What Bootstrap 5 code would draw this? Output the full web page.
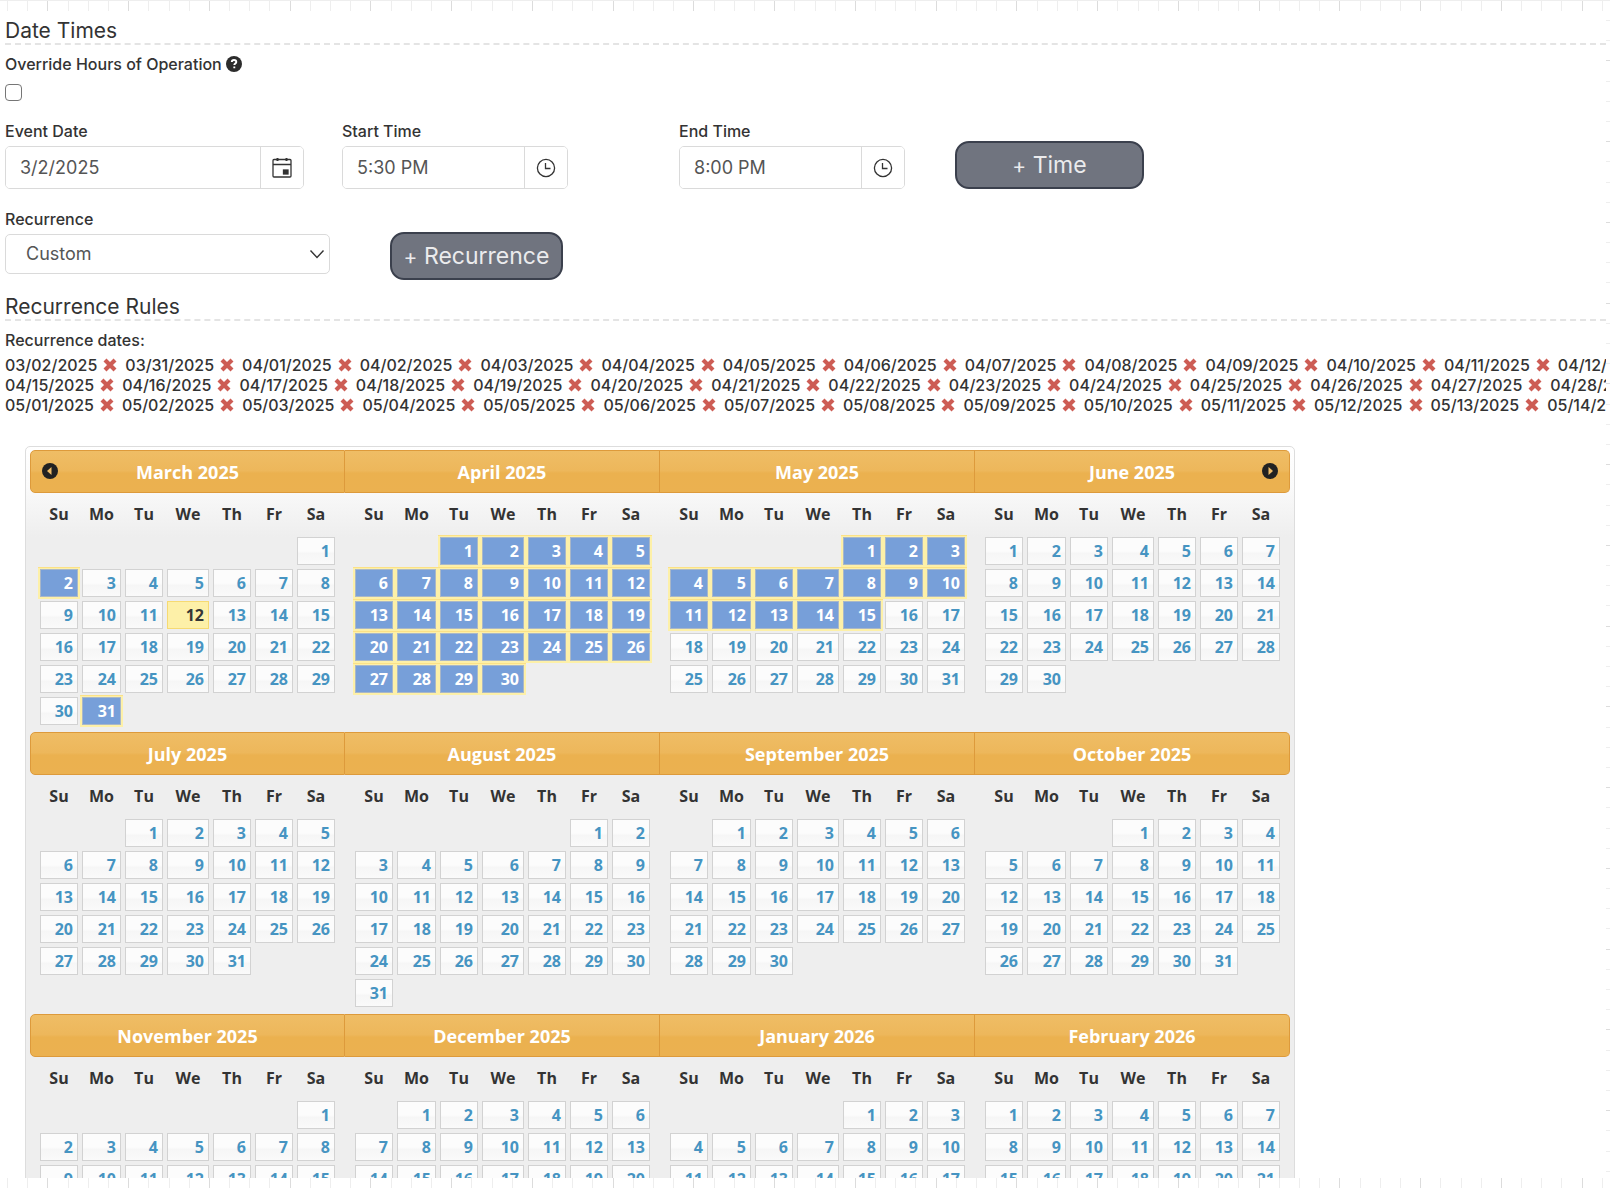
<!DOCTYPE html>
<html lang="en">
<head>
<meta charset="utf-8">
<meta name="viewport" content="width=device-width, initial-scale=1">
<title>Date Times</title>
<link href="https://cdn.jsdelivr.net/npm/bootstrap@5.3.0/dist/css/bootstrap.min.css" rel="stylesheet">
<style>
body{font-family:Inter,"Liberation Sans",sans-serif;font-size:16px;line-height:20px;color:#333;background:#fff}
button,input,select{font-family:inherit}
.ruler-x{height:10px;padding:0 7px}
.ruler-x.top{height:11px;border-top:1px solid #eee}
.ruler-y{width:4px;padding:9px 0 6px;flex:none}
.ruler-x i{width:1px;background:#eee}
.ruler-y i{height:1px;background:#eee}
.ruler-x i:nth-child(4n+3),.ruler-y i:nth-child(4n+3){background:#dcdcdc}
.pane{min-width:0;padding-left:5px}
.section-title{font-size:21px;line-height:24px;font-weight:400;padding-top:8px;margin:0 0 9px;border-bottom:2px dashed #e4e4e4}
.field-label{font-weight:500;line-height:20px;display:block;margin:0 0 5px}
.check-box{width:17px;height:17px;margin:5px 0 0;border:1px solid #767676;border-radius:3px;display:block}
.field-row{padding-top:20px}
.field-col{width:337px;flex:none}
.field-col.last{width:276px}
.field-box{height:43px;border:1px solid #dadada;border-radius:5px;overflow:hidden;flex-wrap:nowrap}
.field-box .form-control{border:0;border-radius:0;padding:0 14px;font-size:18px;color:#555;height:41px}
.field-box .pick{width:43px;padding:0;border:0;border-left:1px solid #dadada;background:#fff;color:#333;flex:none}
.date-w{width:299px}.time-w{width:226px}
.pick svg{display:block;margin:auto}
.add-btn{height:48px;background:#70747f;border:2px solid #3b404d;border-radius:14px;color:#ebebed;font-size:23px;line-height:28px;padding:0;flex:none}
.add-btn .plus{font-size:21px}
.add-time{width:189px}
.add-rec{width:173px;margin:23px 0 7px 60px}
.rec-select{--bs-form-select-bg-img:url("data:image/svg+xml,%3csvg xmlns='http://www.w3.org/2000/svg' viewBox='0 0 16 16'%3e%3cpath fill='none' stroke='%23333' stroke-width='1.4' d='M1.5 4.500L8 11.500L14.500 4.500'/%3e%3c/svg%3e");background-image:var(--bs-form-select-bg-img);width:325px;height:40px;border:1px solid #dadada;border-radius:5px;color:#555;font-size:18px;line-height:24px;padding:0 36px 0 20px;background-position:right 4px center;background-size:16px 16px}
.date-list{font-weight:500;white-space:nowrap}
.date-list .item{display:inline-flex;align-items:center;margin-right:8px}
.drop{border:0;background:none;padding:0;margin-left:6px;width:14px;height:14px;line-height:0}
.cal{width:1270px;margin:31px 0 0 20px;padding:3px 4px;border:1px solid #ddd;border-radius:5px;background:linear-gradient(#fff 0,#fafafa 40px,#eee 90px);font-family:"Open Sans","Noto Sans",sans-serif;font-weight:700}
.month{flex:1 1 0;padding-bottom:5px}
.month-head{height:43px;border:1px solid #dd9a3b;border-left-width:0;background:linear-gradient(#efbd65,#edb75b 48%,#ebb14f 54%,#ebb150);color:#fff;font-size:18px}
.month:first-child .month-head{border-left-width:1px;border-radius:5px 0 0 5px}
.month:last-child .month-head{border-radius:0 5px 5px 0}
.nav-dot{position:absolute;top:12px;width:16px;height:16px;border:0;padding:0;background:none;line-height:0}
.nav-dot.prev{left:11px}.nav-dot.next{right:11px}
.days{table-layout:fixed;width:calc(100% - 16px);margin:0 8px;border-collapse:separate;border-spacing:0}
.days th{height:42px;padding:0;text-align:center;font-size:16px;font-weight:700;vertical-align:middle}
.days td{height:32px;padding:1px 2px 2px;border-top:1px solid transparent}
.days a{display:block;height:28px;line-height:26px;border:1px solid #d2d2d2;background:linear-gradient(#fcfcfc 50%,#f6f6f6 60%,#fafafa);color:#4694c2;text-align:right;padding:0 4px;text-decoration:none;font-size:16px}
.days td.picked{background:#fdf0a8;border-top-color:#fbe187}
.days td.picked a{background:#779fd9;border-color:#a9b7c8;color:#fff}
.days td.today a{background:#fdf0a8;border-color:#f6da72;color:#363636}
</style>
</head>
<body>
<div class="vh-100 d-flex flex-column overflow-hidden">
<div class="ruler-x top d-flex justify-content-between flex-shrink-0" data-ticks="80"></div>
<div class="d-flex flex-grow-1 overflow-hidden">
<main class="pane flex-grow-1 overflow-hidden">
  <h2 class="section-title">Date Times</h2>
  <div class="d-flex gap-1">
    <label class="field-label" for="ovr">Override Hours of Operation</label>
    <svg width="16" height="20" viewBox="0 -2 16 20"><circle cx="8" cy="8" r="8" fill="#2c2c2c"/><path d="M5.8 6.1C5.8 4.7 6.8 4 8 4s2.3.8 2.3 2c0 1.4-2 1.6-2 3M8.3 10.400v1.900" fill="none" stroke="#fff" stroke-width="1.900"/></svg>
  </div>
  <input class="check-box form-check-input ms-0" type="checkbox" id="ovr">
  <div class="d-flex field-row">
    <div class="field-col">
      <label class="field-label" for="ed">Event Date</label>
      <div class="input-group field-box date-w"><input id="ed" class="form-control" value="3/2/2025"><button class="pick ms-0" aria-label="Open calendar"><svg width="20" height="22" viewBox="0 0 20 22" fill="none" stroke="#333" stroke-width="1.300"><rect x="1" y="2.500" width="18" height="17.500" rx="1"/><path d="M1 7.500h18"/><path d="M5.500 1v3M14.500 1v3" stroke-width="2"/><rect x="11.500" y="13" width="4.500" height="4" fill="#333"/></svg></button></div>
    </div>
    <div class="field-col">
      <label class="field-label" for="st">Start Time</label>
      <div class="input-group field-box time-w"><input id="st" class="form-control" value="5:30 PM"><button class="pick ms-0" aria-label="Open start times"><svg width="20" height="20" viewBox="0 0 20 20" fill="none" stroke="#333" stroke-width="1.300"><circle cx="10" cy="10" r="8.600"/><path d="M9.500 5v5.500h5"/></svg></button></div>
    </div>
    <div class="field-col last">
      <label class="field-label" for="et">End Time</label>
      <div class="input-group field-box time-w"><input id="et" class="form-control" value="8:00 PM"><button class="pick ms-0" aria-label="Open end times"><svg width="20" height="20" viewBox="0 0 20 20" fill="none" stroke="#333" stroke-width="1.300"><circle cx="10" cy="10" r="8.600"/><path d="M9.500 5v5.500h5"/></svg></button></div>
    </div>
    <button class="add-btn add-time align-self-end"><span class="plus">+</span> Time</button>
  </div>
  <div class="d-flex field-row">
    <div>
      <label class="field-label" for="rc">Recurrence</label>
      <select id="rc" class="form-select rec-select"><option>Custom</option></select>
    </div>
    <button class="add-btn add-rec"><span class="plus">+</span> Recurrence</button>
  </div>
  <h2 class="section-title">Recurrence Rules</h2>
  <p class="field-label">Recurrence dates:</p>
  <div class="date-list" id="dates"></div>
  <div class="cal" id="cal"></div>
</main>
<div class="ruler-y d-flex flex-column justify-content-between" data-ticks="58"></div>
</div>
<div class="ruler-x d-flex justify-content-between flex-shrink-0" data-ticks="80"></div>
</div>
<script src="https://cdn.jsdelivr.net/npm/bootstrap@5.3.0/dist/js/bootstrap.bundle.min.js"></script>
<script>
document.querySelectorAll('[data-ticks]').forEach(r => { r.innerHTML = '<i></i>'.repeat(+r.dataset.ticks); });
const two = n => String(n).padStart(2, '0');
const span = (m, a, b) => Array.from({length: b - a + 1}, (_, i) => [m, a + i]);
const lines = [[[3, 2], [3, 31], ...span(4, 1, 14)], span(4, 15, 30), span(5, 1, 15)];
const cross = '<svg width="14" height="14" viewBox="0 0 14 14"><path d="M2 2L12 12M12 2L2 12" stroke="#cd5c54" stroke-width="4.200"/></svg>';
document.getElementById('dates').innerHTML = lines.map(l => '<div>' + l.map(([m, d]) =>
  `<span class="item">${two(m)}/${two(d)}/2025<button class="drop" aria-label="Remove date">${cross}</button></span>`).join('') + '</div>').join('');
const picked = new Set(lines.flat().map(x => x.join('-')));
const names = ['January','February','March','April','May','June','July','August','September','October','November','December'];
const arrow = d => `<svg width="16" height="16" viewBox="0 0 16 16"><circle cx="8" cy="8" r="8" fill="#222"/><path d="${d}" fill="#f0bd68"/></svg>`;
let html = '';
for (let r = 0; r < 3; r++) {
  html += '<div class="d-flex">';
  for (let c = 0; c < 4; c++) {
    const first = new Date(2025, 2 + r * 4 + c, 1), y = first.getFullYear(), m = first.getMonth();
    const lead = first.getDay(), total = new Date(y, m + 1, 0).getDate();
    let rows = '';
    for (let w = 0; w < 6; w++) {
      rows += '<tr>';
      for (let k = 0; k < 7; k++) {
        const d = w * 7 + k - lead + 1;
        if (d < 1 || d > total) { rows += '<td></td>'; continue; }
        const cls = y === 2025 && picked.has((m + 1) + '-' + d) ? 'picked' : (y === 2025 && m === 2 && d === 12 ? 'today' : '');
        rows += `<td class="${cls}"><a href="#">${d}</a></td>`;
      }
      rows += '</tr>';
    }
    const nav = r ? '' : c === 0 ? `<button class="nav-dot prev" aria-label="Previous">${arrow('M9.500 4v8L5 8z')}</button>`
      : c === 3 ? `<button class="nav-dot next" aria-label="Next">${arrow('M6.500 4v8L11 8z')}</button>` : '';
    html += `<div class="month"><div class="month-head position-relative d-flex align-items-center justify-content-center">${nav}<span>${names[m]} ${y}</span></div>
      <table class="days"><colgroup>${[42,43,42,46,42,42,42].map(w => `<col style="width:${w}px">`).join('')}</colgroup>
      <thead><tr>${['Su','Mo','Tu','We','Th','Fr','Sa'].map(x => `<th>${x}</th>`).join('')}</tr></thead><tbody>${rows}</tbody></table></div>`;
  }
  html += '</div>';
}
document.getElementById('cal').innerHTML = html;
</script>
</body>
</html>
